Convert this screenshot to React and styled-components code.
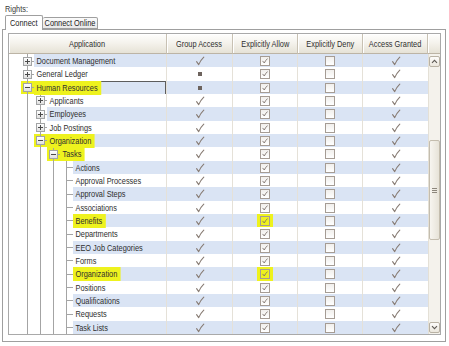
import React from 'react';
import styled, { createGlobalStyle } from 'styled-components';

const LINE = '#a4a4a4';
const ROW_BLUE = '#dae4f4';
const MARK = '#eef21e';
const INK = '#877b73';
const NARROW = 0.82;

const GlobalStyle = createGlobalStyle`
  html, body {
    margin: 0;
    padding: 0;
    background: #fff;
  }
  body {
    font-family: "Liberation Sans", Arial, sans-serif;
    font-size: 9px;
    color: #2e2e2e;
  }
`;

// the original UI font is much narrower than anything installed, so text is squeezed
const Squeeze = styled.span`
  display: inline-block;
  white-space: nowrap;
  transform: scaleX(${NARROW});
  transform-origin: ${({ $origin }) => $origin || 'center'} center;
`;

const Page = styled.div`
  width: 449px;
  height: 346px;
  box-sizing: border-box;
  padding: 3px 3px 0 2px;
`;

const Caption = styled.div`
  height: 12px;
  line-height: 12px;
  padding-left: 3px;
  color: #3a3a3a;
`;

const TabStrip = styled.div`
  display: flex;
  align-items: flex-end;
  height: 14px;
  padding-left: 3px;
`;

const Tab = styled.div`
  box-sizing: border-box;
  height: ${({ $active }) => ($active ? '15px' : '12px')};
  width: ${({ $w }) => $w}px;
  margin-bottom: ${({ $active }) => ($active ? '-1px' : '0')};
  border: 1px solid #9f9f9f;
  border-bottom: ${({ $active }) => ($active ? 'none' : '1px solid #9f9f9f')};
  border-left-width: ${({ $active }) => ($active ? '1px' : '0')};
  border-radius: 2px 2px 0 0;
  background: ${({ $active }) => ($active ? '#fff' : 'linear-gradient(#fbfbfb, #e9e9e9)')};
  display: flex;
  align-items: center;
  justify-content: center;
  position: relative;
  z-index: ${({ $active }) => ($active ? 1 : 0)};
  color: #222;
`;

const Panel = styled.div`
  box-sizing: border-box;
  width: 444px;
  height: 313px;
  border: 1px solid #9f9f9f;
  padding: 3px 4px 0 5px;
  background: #fff;
`;

const Grid = styled.div`
  box-sizing: border-box;
  width: 433px;
  height: 302px;
  border: 1px solid #a9a9a9;
  display: flex;
  flex-direction: column;
  overflow: hidden;
`;

const HeaderRow = styled.div`
  display: grid;
  grid-template-columns: 158px 66px 65px 65px 65px 12px;
  height: 20px;
`;

const HeaderCell = styled.div`
  box-sizing: border-box;
  display: flex;
  align-items: center;
  justify-content: center;
  border-right: 1px solid #c8c1b3;
  border-bottom: 1px solid #bcb4a5;
  background: linear-gradient(#fefefd, #f5f3ed 45%, #e6e2d6);
  box-shadow: inset 1px 1px 0 #fff;
  color: #2e2e2e;
  white-space: nowrap;
  &:last-child {
    border-right: none;
  }
`;

const Body = styled.div`
  display: flex;
  flex: 1;
  min-height: 0;
`;

const Rows = styled.div`
  width: 419px;
  display: flex;
  flex-direction: column;
`;

const Row = styled.div`
  display: grid;
  grid-template-columns: 158px 66px 65px 65px 65px;
  height: calc(40px / 3);
  flex: none;
`;

const AppCell = styled.div`
  box-sizing: border-box;
  display: flex;
  padding-left: 12px;
  border-right: 1px solid #e5e1d8;
  background: #fff;
  min-width: 0;
  overflow: hidden;
`;

const Indent = styled.span`
  flex: none;
  width: 13px;
  height: 100%;
  display: flex;
  align-items: center;
  justify-content: center;
  background-color: ${({ $mark }) => ($mark ? MARK : 'transparent')};
  background-image: linear-gradient(${LINE}, ${LINE})
    ${({ $joint }) => ($joint ? `, linear-gradient(${LINE}, ${LINE})` : '')};
  background-position: 6px 0, 6px 50%;
  background-size: 1px 100%, 7px 1px;
  background-repeat: no-repeat;
`;

const Expander = styled.span`
  box-sizing: border-box;
  width: 9px;
  height: 9px;
  border: 1px solid #a2a4a5;
  background-color: #fff;
  background-image: linear-gradient(#4a4a4a, #4a4a4a)
      ${({ $open }) => ($open ? '' : ', linear-gradient(#4a4a4a, #4a4a4a)')},
    linear-gradient(#ffffff, #e0e0e0);
  background-position: center, center, center;
  background-size: ${({ $open }) => ($open ? '5px 1px, 100% 100%' : '5px 1px, 1px 5px, 100% 100%')};
  background-repeat: no-repeat;
`;

const LabelArea = styled.span`
  flex: 1;
  display: flex;
  min-width: 0;
  background: ${({ $alt }) => ($alt ? ROW_BLUE : '#fff')};
  outline: ${({ $focus }) => ($focus ? '1px solid #5d5d5d' : 'none')};
  outline-offset: -1px;
`;

const Label = styled(Squeeze)`
  display: flex;
  align-items: center;
  padding: 0 4px 0 3px;
  background: ${({ $mark }) => ($mark ? MARK : 'transparent')};
`;

const Cell = styled.div`
  box-sizing: border-box;
  display: flex;
  align-items: center;
  justify-content: center;
  border-right: 1px solid #e5e1d8;
  background: ${({ $alt }) => ($alt ? ROW_BLUE : '#fff')};
  &:last-child {
    border-right: none;
  }
`;

const Partial = styled.span`
  width: 4px;
  height: 4px;
  background: #6d635d;
`;

const BoxPad = styled.span`
  display: flex;
  padding: 2px 3px;
  background: ${({ $mark }) => ($mark ? MARK : 'transparent')};
`;

const CheckBox = styled.span`
  box-sizing: border-box;
  width: 10px;
  height: 10px;
  border: 1px solid #a59c94;
  display: flex;
  align-items: center;
  justify-content: center;
  background: ${({ $mark }) => ($mark ? MARK : 'linear-gradient(#f1efec, #ffffff)')};
`;

const ScrollBar = styled.div`
  width: 12px;
  display: flex;
  flex-direction: column;
  align-items: center;
  background: #f4f2ec;
  border-left: 1px solid #e4e0d6;
  box-sizing: border-box;
`;

const ScrollButton = styled.div`
  box-sizing: border-box;
  width: 11px;
  height: 11px;
  margin: ${({ $down }) => ($down ? '0 0 1px' : '2px 0 0')};
  border: 1px solid #b9b2a4;
  border-radius: 2px;
  background: linear-gradient(#fdfcfa, #ebe7dd);
  display: flex;
  align-items: center;
  justify-content: center;
`;

const Thumb = styled.div`
  box-sizing: border-box;
  width: 11px;
  height: 100px;
  margin-top: 73px;
  border: 1px solid #c4bdae;
  border-radius: 2px;
  background: linear-gradient(90deg, #f7f5f0, #e7e3d8);
  display: flex;
  align-items: center;
  justify-content: center;
`;

const Track = styled.div`
  flex: 1;
`;

const Tick = ({ size = 10 }) => (
  <svg width={size} height={size} viewBox="0 0 10 10">
    <path d="M1.6 5.6 L3.7 8.6 Q5.6 4.2 8.8 1.2" fill="none" stroke={INK} strokeWidth="1.1" strokeLinecap="round" strokeLinejoin="round" />
  </svg>
);

const SmallTick = () => (
  <svg width="6" height="6" viewBox="0 0 6 6">
    <path d="M0.8 3.2 L2.3 5 Q3.3 2.6 5.3 0.8" fill="none" stroke="#7d726b" strokeWidth="0.9" strokeLinecap="round" />
  </svg>
);

const Chevron = ({ down }) => (
  <svg width="7" height="5" viewBox="0 0 7 5">
    <path d={down ? 'M1 1.2 L3.5 3.7 L6 1.2' : 'M1 3.8 L3.5 1.3 L6 3.8'} fill="none" stroke="#5e5a55" strokeWidth="1.1" />
  </svg>
);

const Grip = () => (
  <svg width="5" height="5" viewBox="0 0 5 5">
    <path d="M0 0.5 H5 M0 2.5 H5 M0 4.5 H5" stroke="#8c867c" strokeWidth="1" />
  </svg>
);

const leaves = [
  'Actions',
  'Approval Processes',
  'Approval Steps',
  'Associations',
  'Benefits',
  'Departments',
  'EEO Job Categories',
  'Forms',
  'Organization',
  'Positions',
  'Qualifications',
  'Requests',
  'Task Lists',
];

const rows = [
  { label: 'Document Management', level: 0, node: 'closed' },
  { label: 'General Ledger', level: 0, node: 'closed', group: 'partial' },
  { label: 'Human Resources', level: 0, node: 'open', group: 'partial', mark: true, focus: true },
  { label: 'Applicants', level: 1, node: 'closed' },
  { label: 'Employees', level: 1, node: 'closed' },
  { label: 'Job Postings', level: 1, node: 'closed' },
  { label: 'Organization', level: 1, node: 'open', mark: true },
  { label: 'Tasks', level: 2, node: 'open', mark: true },
  ...leaves.map((label, i) => ({
    label,
    level: 3,
    node: 'leaf',
    mark: i === 4 || i === 8,
    allowMark: i === 4 || i === 8,
  })),
];

const TreeCell = ({ row, alt }) => {
  const guides = Array.from({ length: row.level }, (_, i) => <Indent key={i} />);
  const isNode = row.node !== 'leaf';
  return (
    <AppCell>
      {guides}
      <Indent $joint $mark={isNode && row.mark}>
        {isNode && <Expander $open={row.node === 'open'} />}
      </Indent>
      <LabelArea $alt={alt} $focus={row.focus}>
        <Label $origin="left" $mark={row.mark}>{row.label}</Label>
      </LabelArea>
    </AppCell>
  );
};

const TreeRow = ({ row, index }) => {
  const alt = index % 2 === 0;
  return (
    <Row>
      <TreeCell row={row} alt={alt} />
      <Cell $alt={alt}>{row.group === 'partial' ? <Partial /> : <Tick />}</Cell>
      <Cell $alt={alt}>
        <BoxPad $mark={row.allowMark}>
          <CheckBox $mark={row.allowMark}>
            <SmallTick />
          </CheckBox>
        </BoxPad>
      </Cell>
      <Cell $alt={alt}>
        <BoxPad>
          <CheckBox />
        </BoxPad>
      </Cell>
      <Cell $alt={alt}>
        <Tick />
      </Cell>
    </Row>
  );
};

const columns = ['Application', 'Group Access', 'Explicitly Allow', 'Explicitly Deny', 'Access Granted'];

export default function App() {
  return (
    <>
      <GlobalStyle />
      <Page>
        <Caption>
          <Squeeze $origin="left">Rights:</Squeeze>
        </Caption>
        <TabStrip>
          <Tab $active $w={38}>
            <Squeeze>Connect</Squeeze>
          </Tab>
          <Tab $w={55}>
            <Squeeze>Connect Online</Squeeze>
          </Tab>
        </TabStrip>
        <Panel>
          <Grid>
            <HeaderRow>
              {columns.map((name) => (
                <HeaderCell key={name}>
                  <Squeeze>{name}</Squeeze>
                </HeaderCell>
              ))}
              <HeaderCell />
            </HeaderRow>
            <Body>
              <Rows>
                {rows.map((row, i) => (
                  <TreeRow key={i} row={row} index={i} />
                ))}
              </Rows>
              <ScrollBar>
                <ScrollButton>
                  <Chevron />
                </ScrollButton>
                <Thumb>
                  <Grip />
                </Thumb>
                <Track />
                <ScrollButton $down>
                  <Chevron down />
                </ScrollButton>
              </ScrollBar>
            </Body>
          </Grid>
        </Panel>
      </Page>
    </>
  );
}
